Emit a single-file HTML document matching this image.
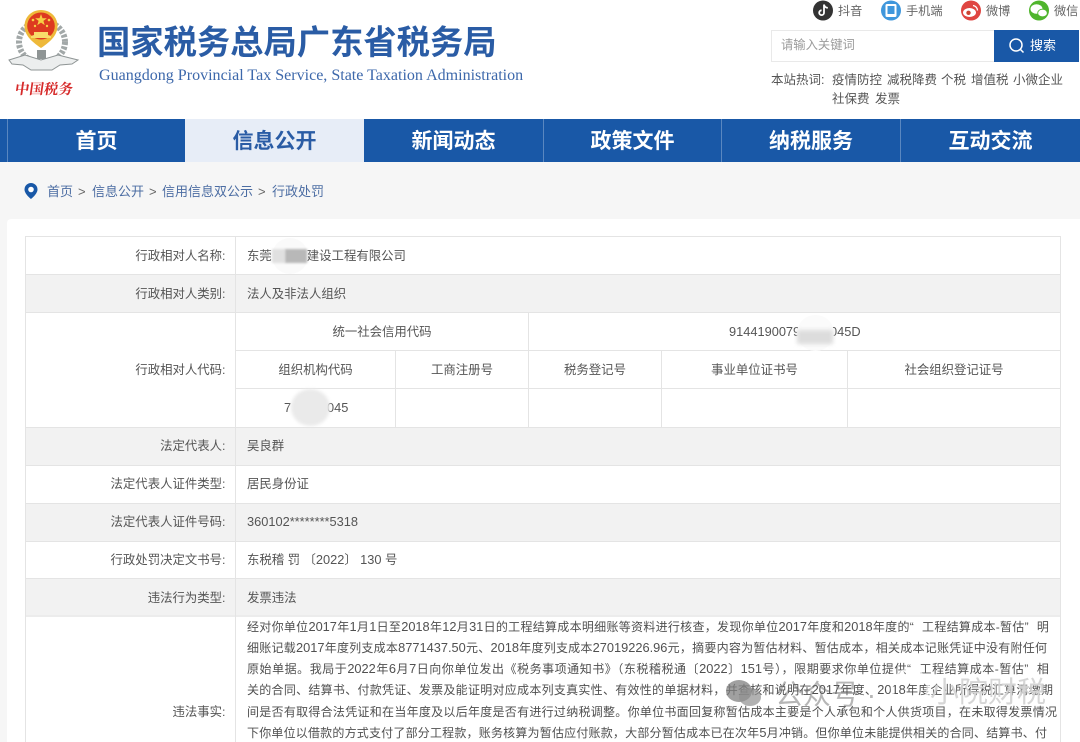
<!DOCTYPE html>
<html lang="zh-CN"><head><meta charset="utf-8"><title>行政处罚</title>
<style>
*{margin:0;padding:0;box-sizing:border-box}
html,body{width:1080px;height:742px;overflow:hidden;background:#fff}
body{font-family:"Liberation Sans","Noto Sans CJK SC",sans-serif;color:#555;font-size:12.4px}
#w{position:relative;width:1080px;height:742px;overflow:hidden;filter:blur(.3px)}
.a,.a *{white-space:nowrap}
.a{position:absolute}
.nav{position:absolute;top:119px;height:43px;background:#1958a7;color:#fff;font-size:21px;font-weight:700;line-height:45px;text-align:center;border-left:1px solid #5a87c0}
.h{position:absolute;height:1px;background:#e4e4e4}
.v{position:absolute;width:1px;background:#e4e4e4}
.lab{position:absolute;left:26px;width:199.500px;text-align:right;line-height:18px;color:#555}
.val{position:absolute;left:247px;line-height:18px;color:#555;white-space:nowrap}
.c{position:absolute;text-align:center;line-height:18px;color:#555;white-space:nowrap}
.grey{position:absolute;left:26px;width:1034px;background:#f2f2f2}
.tl{position:absolute;left:247px;height:18px;overflow:hidden;line-height:18px;color:#505050;font-size:12px;text-align:justify;text-align-last:justify;text-justify:inter-character}
i{font-style:normal;font-size:12.800px}
.o,.e{display:inline-block;width:12px;font-style:normal}
.o{text-align:right}.e{text-align:left}
.bc{position:absolute;top:184px;line-height:16px;color:#4c6da3;font-size:13px;white-space:nowrap}
.hot{position:absolute;line-height:16px;color:#555;font-size:12.500px;white-space:nowrap}
.soc{position:absolute;top:3px;line-height:16px;color:#666;font-size:12.200px;white-space:nowrap}
</style></head><body><div id="w">

<!-- logo -->
<svg class="a" style="left:0;top:0" width="90" height="80" viewBox="0 0 90 80">
<ellipse cx="42" cy="42" rx="23" ry="21" fill="none" stroke="#a2a8a8" stroke-width="6" stroke-dasharray="3 1.500"/>
<path d="M41 10c9.500 0 16.500 7 16.500 16 0 8.500-6 15-16.500 22-10.500-7-16.500-13.500-16.500-22 0-9 7-16 16.500-16z" fill="#eeb93a"/>
<ellipse cx="41" cy="26" rx="13.800" ry="13.500" fill="#dd3a20"/>
<path d="M41 14l1.500 4.200h4.400l-3.500 2.700 1.300 4.200-3.700-2.500-3.700 2.500 1.300-4.200-3.500-2.700h4.400z" fill="#f6cf45"/>
<circle cx="33" cy="20" r="1.300" fill="#f6cf45"/><circle cx="49" cy="20" r="1.300" fill="#f6cf45"/><circle cx="35" cy="26" r="1.200" fill="#f6cf45"/><circle cx="47" cy="26" r="1.200" fill="#f6cf45"/>
<path d="M31 38h20v-2l-3-1v-3H34v3l-3 1z" fill="#f8dc6a"/>
<path d="M9 60l16-5 16 5 17-5 20 5-6 4-12 1-8 5H31l-8-5-11-1z" fill="#eceeee" stroke="#8f9595" stroke-width="1"/>
<rect x="37" y="50" width="9" height="9" fill="#8f9595"/>
</svg>
<div class="a" style="left:15px;top:79px;font:700 14.500px/20px 'Noto Serif CJK SC',serif;color:#d62a2a;transform:skewX(-8deg)">中国税务</div>

<div class="a" style="left:97px;top:23px;font-size:33.300px;line-height:42px;font-weight:700;color:#2a5ca5">国家税务总局广东省税务局</div>
<div class="a" style="left:99px;top:66px;font:16.050px/20px 'Liberation Serif',serif;color:#3d68ab">Guangdong Provincial Tax Service, State Taxation Administration</div>

<!-- social -->
<svg class="a" style="left:812px;top:0" width="268" height="22" viewBox="0 0 268 22">
<circle cx="11" cy="10.500" r="10" fill="#333"/>
<path d="M12 4.500v8.200a2.400 2.400 0 1 1-2.400-2.400M12 4.500c.4 2 1.700 3.200 3.800 3.400" fill="none" stroke="#fff" stroke-width="1.800"/>
<circle cx="79" cy="10.500" r="10" fill="#3f97dc"/>
<rect x="73.500" y="4" width="11" height="13" rx="1.500" fill="#fff"/><rect x="75.500" y="6" width="7" height="8" fill="#3f97dc"/>
<circle cx="159" cy="10.500" r="10" fill="#df4541"/>
<ellipse cx="157.500" cy="12.500" rx="6.500" ry="4.500" fill="#fff"/><circle cx="156.500" cy="12.800" r="2.200" fill="#c43"/>
<path d="M161 5.500a5 5 0 0 1 4.500 5" stroke="#fff" stroke-width="1.300" fill="none"/>
<circle cx="227" cy="10.500" r="10" fill="#4fb52c"/>
<ellipse cx="224.500" cy="9" rx="6" ry="4.800" fill="#fff"/><ellipse cx="230.500" cy="13" rx="4.800" ry="3.800" fill="#fff" stroke="#4fb52c" stroke-width=".8"/>
</svg>
<div class="soc" style="left:838px">抖音</div>
<div class="soc" style="left:906px">手机端</div>
<div class="soc" style="left:986px">微博</div>
<div class="soc" style="left:1054px">微信</div>

<!-- search -->
<div class="a" style="left:771px;top:30px;width:224px;height:32px;border:1px solid #e9e9e9;border-right:0;background:#fff;padding-left:9px;line-height:29px;color:#9a9a9a;font-size:12.300px">请输入关键词</div>
<div class="a" style="left:994px;top:30px;width:85px;height:32px;background:#1958a7;color:#fff;padding-left:36px;line-height:32px;font-size:13px">搜索</div>
<svg class="a" style="left:1008px;top:37px" width="18" height="18" viewBox="0 0 18 18"><circle cx="8" cy="8" r="6" fill="none" stroke="#fff" stroke-width="1.500"/><path d="M12.500 12.500l3 3" stroke="#fff" stroke-width="1.500"/></svg>
<div class="hot" style="left:771px;top:72px">本站热词:</div>
<div class="hot" style="left:832px;top:72px">疫情防控</div>
<div class="hot" style="left:887px;top:72px">减税降费</div>
<div class="hot" style="left:941px;top:72px">个税</div>
<div class="hot" style="left:971px;top:72px">增值税</div>
<div class="hot" style="left:1013px;top:72px">小微企业</div>
<div class="hot" style="left:832px;top:91px">社保费</div>
<div class="hot" style="left:875px;top:91px">发票</div>

<!-- nav -->
<div class="nav" style="left:0;width:7px;border:0"></div>
<div class="nav" style="left:7px;width:178px">首页</div>
<div class="nav" style="left:185px;width:179px;background:#e7edf7;color:#2a5ca5;border:0">信息公开</div>
<div class="nav" style="left:364px;width:179px;border:0">新闻动态</div>
<div class="nav" style="left:543px;width:178px">政策文件</div>
<div class="nav" style="left:721px;width:179px">纳税服务</div>
<div class="nav" style="left:900px;width:180px">互动交流</div>

<!-- page bg -->
<div class="a" style="left:0;top:162px;width:1080px;height:580px;background:#f6f6f6"></div>
<svg class="a" style="left:23px;top:182px" width="16" height="18" viewBox="0 0 16 18"><path d="M8 1a6.500 6.500 0 0 0-6.500 6.500C1.500 12 8 17 8 17s6.500-5 6.500-9.500A6.500 6.500 0 0 0 8 1z" fill="#1958a7"/><circle cx="8" cy="7.500" r="2.800" fill="#fff"/></svg>
<div class="bc" style="left:47px">首页</div><div class="bc" style="left:78px;color:#666">&gt;</div>
<div class="bc" style="left:92px">信息公开</div><div class="bc" style="left:149px;color:#666">&gt;</div>
<div class="bc" style="left:162px">信用信息双公示</div><div class="bc" style="left:258px;color:#666">&gt;</div>
<div class="bc" style="left:272px">行政处罚</div>

<!-- card -->
<div class="a" style="left:7px;top:219px;width:1073px;height:523px;background:#fff;border-radius:4px 0 0 0"></div>

<!-- grey rows -->
<div class="grey" style="top:275px;height:37px"></div>
<div class="grey" style="top:428px;height:37px"></div>
<div class="grey" style="top:504px;height:37px"></div>
<div class="grey" style="top:579px;height:37px"></div>

<!-- grid lines -->
<div class="h" style="left:25px;top:236px;width:1036px"></div>
<div class="h" style="left:25px;top:274px;width:1036px"></div>
<div class="h" style="left:25px;top:312px;width:1036px"></div>
<div class="h" style="left:25px;top:427px;width:1036px"></div>
<div class="h" style="left:25px;top:465px;width:1036px"></div>
<div class="h" style="left:25px;top:503px;width:1036px"></div>
<div class="h" style="left:25px;top:541px;width:1036px"></div>
<div class="h" style="left:25px;top:578px;width:1036px"></div>
<div class="h" style="left:25px;top:615px;width:1036px;height:2px;background:#ececec"></div>
<div class="h" style="left:236px;top:350px;width:825px"></div>
<div class="h" style="left:236px;top:388px;width:825px"></div>
<div class="v" style="left:25px;top:236px;height:506px"></div>
<div class="v" style="left:1060px;top:236px;height:506px"></div>
<div class="v" style="left:235px;top:236px;height:506px"></div>
<div class="v" style="left:528px;top:312px;height:115px"></div>
<div class="v" style="left:395px;top:350px;height:77px"></div>
<div class="v" style="left:661px;top:350px;height:77px"></div>
<div class="v" style="left:847px;top:350px;height:77px"></div>

<!-- labels -->
<div class="lab" style="top:247px">行政相对人名称:</div>
<div class="lab" style="top:285px">行政相对人类别:</div>
<div class="lab" style="top:361px">行政相对人代码:</div>
<div class="lab" style="top:437px">法定代表人:</div>
<div class="lab" style="top:475px">法定代表人证件类型:</div>
<div class="lab" style="top:513px">法定代表人证件号码:</div>
<div class="lab" style="top:551px">行政处罚决定文书号:</div>
<div class="lab" style="top:589px">违法行为类型:</div>
<div class="lab" style="top:703px">违法事实:</div>

<!-- values -->
<div class="val" style="top:247px">东莞<span style="display:inline-block;width:35px"></span>建设工程有限公司</div>
<div class="a" style="left:272px;top:238px;width:36px;height:36px;border-radius:50%;background:#fafafa"></div>
<div class="a" style="left:272px;top:249px;width:13px;height:14px;background:#e0e0e0;filter:blur(1px)"></div>
<div class="a" style="left:285px;top:249px;width:22px;height:14px;background:#b8b8b8;filter:blur(1px)"></div>
<div class="val" style="top:285px">法人及非法人组织</div>
<div class="c" style="left:236px;width:292px;top:323px">统一社会信用代码</div>
<div class="val" style="left:729px;top:323px"><i>9144190079</i></div>
<div class="val" style="left:830px;top:323px"><i>045D</i></div>
<div class="a" style="left:797px;top:315px;width:37px;height:36px;border-radius:50%;background:#fbfbfb"></div>
<div class="a" style="left:797px;top:330px;width:36px;height:14px;background:#dcdcdc;filter:blur(2px)"></div>
<div class="c" style="left:236px;width:159px;top:361px">组织机构代码</div>
<div class="c" style="left:396px;width:132px;top:361px">工商注册号</div>
<div class="c" style="left:529px;width:132px;top:361px">税务登记号</div>
<div class="c" style="left:662px;width:185px;top:361px">事业单位证书号</div>
<div class="c" style="left:848px;width:212px;top:361px">社会组织登记证号</div>
<div class="val" style="left:284px;top:399px"><i>7</i></div>
<div class="val" style="left:327px;top:399px"><i>045</i></div>
<div class="a" style="left:291px;top:389px;width:39px;height:37px;border-radius:50%;background:#eaeaea;filter:blur(1.500px)"></div>
<div class="val" style="top:437px">吴良群</div>
<div class="val" style="top:475px">居民身份证</div>
<div class="val" style="top:513px"><i>360102********5318</i></div>
<div class="val" style="top:551px">东税稽 罚 〔<i>2022</i>〕 <i>130</i> 号</div>
<div class="val" style="top:589px">发票违法</div>

<div class="tl" style="top:618px;width:802px">经对你单位<i>2017</i>年<i>1</i>月<i>1</i>日至<i>2018</i>年<i>12</i>月<i>31</i>日的工程结算成本明细账等资料进行核查&#65292;发现你单位<i>2017</i>年度和<i>2018</i>年度的<span class="o">“</span>工程结算成本-暂估<span class="e">”</span>明</div>
<div class="tl" style="top:639px;width:800px">细账记载<i>2017</i>年度列支成本<i>8771437.50</i>元、<i>2018</i>年度列支成本<i>27019226.96</i>元&#65292;摘要内容为暂估材料、暂估成本&#65292;相关成本记账凭证中没有附任何</div>
<div class="tl" style="top:660px;width:802px">原始单据。我局于<i>2022</i>年<i>6</i>月<i>7</i>日向你单位发出《税务事项通知书》&#65288;东税稽税通〔<i>2022</i>〕<i>151</i>号&#65289;&#65292;限期要求你单位提供<span class="o">“</span>工程结算成本-暂估<span class="e">”</span>相</div>
<div class="tl" style="top:681px;width:806px">关的合同、结算书、付款凭证、发票及能证明对应成本列支真实性、有效性的单据材料&#65292;并查核和说明在<i>2017</i>年度、<i>2018</i>年度企业所得税汇算清缴期</div>
<div class="tl" style="top:703px;width:810px">间是否有取得合法凭证和在当年度及以后年度是否有进行过纳税调整。你单位书面回复称暂估成本主要是个人承包和个人供货项目&#65292;在未取得发票情况</div>
<div class="tl" style="top:724px;width:800px">下你单位以借款的方式支付了部分工程款&#65292;账务核算为暂估应付账款&#65292;大部分暂估成本已在次年<i>5</i>月冲销。但你单位未能提供相关的合同、结算书、付</div>

<!-- watermark -->
<svg class="a" style="left:724px;top:678px" width="40" height="32" viewBox="0 0 40 32"><ellipse cx="15" cy="13" rx="13" ry="11" fill="#808080" opacity=".75"/><ellipse cx="26" cy="19" rx="11" ry="9" fill="#909090" opacity=".7"/></svg>
<div class="a" style="left:775px;top:678px;font-size:28px;line-height:34px;color:rgba(110,110,110,.5)">公众号 ·</div>
<svg class="a" style="left:888px;top:668px" width="44" height="40" viewBox="0 0 44 40"><circle cx="22" cy="20" r="18" fill="none" stroke="rgba(255,255,255,.7)" stroke-width="3"/></svg>
<div class="a" style="left:930px;top:676px;font-size:29px;line-height:34px;color:rgba(120,120,120,.3);text-shadow:0 0 1px #fff">小院财税</div>
</div></body></html>
